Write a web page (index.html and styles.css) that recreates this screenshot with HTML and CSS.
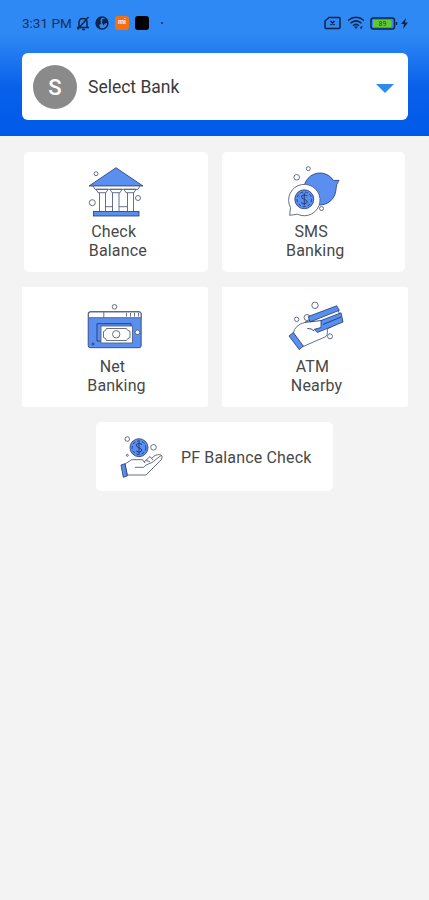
FILE: index.html
```html
<!DOCTYPE html>
<html lang="en">
<head>
    <meta charset="UTF-8">
    <meta name="viewport" content="width=device-width, initial-scale=1.0">
    <title>Bank Balance Check</title>
    <link rel="stylesheet" href="styles.css">
</head>
<body>
<div class="header">
    <div class="status">
        <span class="time">3:31 PM</span>
        <svg class="s-icon" width="14" height="15" viewBox="0 0 14 15"><path d="M3 11V6.500C3 4 4.500 2.500 7 2.500S11 4 11 6.500V11M1 11.500H13M6 13.500H9M12.500 1L1.500 13.500"/></svg>
        <svg class="s-icon globe" width="14" height="14" viewBox="0 0 14 14"><circle cx="7" cy="7" r="5.900"/><path class="dark" d="M1 7C1 3 4 1 7 1L5.500 4L6 8L4 9L6 13C3 12.500 1 10 1 7ZM7.500 3H12L13 7L10 7.500L8.500 9.500L7 7Z"/></svg>
        <span class="app orange">mi</span>
        <span class="app black"></span>
        <span class="dot"></span>
        <span class="right">
            <svg class="s-icon" width="17" height="14" viewBox="0 0 17 14"><path d="M5 1.500H15Q16 1.500 16 2.500V11.500Q16 12.500 15 12.500H2Q1 12.500 1 11.500V5ZM6.500 5L10.500 9M10.500 5L6.500 9"/></svg>
            <svg class="s-icon wifi" width="18" height="14" viewBox="0 0 18 14"><path d="M1 4.500Q9 -2 17 4.500M3.500 7.200Q9 2.500 14.500 7.200M6 9.800Q9 7 12 9.800"/><path class="dark" d="M7 10.500L9 13L11 10.500ZM13 11L16 10L14 13.500Z"/></svg>
            <svg class="s-icon battery" width="28" height="13" viewBox="0 0 28 13"><rect x="1" y="1" width="23.500" height="11" rx="2.500"/><rect class="level" x="3" y="3" width="18.500" height="7"/><path d="M26.500 5V8"/><text x="8.500" y="9.300">89</text></svg>
            <svg width="7" height="11" viewBox="0 0 7 11"><path class="dark" d="M5 0L0 6H3L2 11L7 4.500H4Z"/></svg>
        </span>
    </div>
    <div class="select">
        <span class="avatar">S</span>
        <span class="bank">Select Bank</span>
        <span class="arrow"></span>
    </div>
</div>

<div class="row">
    <div class="card">
        <svg class="icon" width="60" height="54" viewBox="1 0 60 54">
            <path class="blue" d="M31 2.700L58 21H4Z"/>
            <path class="line" d="M8 21H55L53 24.300H10ZM11 24.300H23L21 27.700H13ZM25 24.300H37L35 27.700H27ZM39 24.300H51L49 27.700H41Z"/>
            <path class="line" d="M14.500 28V46M20.500 28V46M27.500 28V46M34 28V46M42.500 28V46M48.500 28V46M20.500 41.700H27.500M34 41.700H42.500"/>
            <rect class="blue" x="8.500" y="46.500" width="45.500" height="4.500"/>
            <circle class="line" cx="11" cy="8.700" r="2"/><circle class="line" cx="7.300" cy="37.700" r="3"/><circle class="line" cx="53" cy="33" r="2.500"/>
        </svg>
        <p>Check 
 Balance</p>
    </div>
    <div class="card">
        <svg class="icon" width="60" height="54" viewBox="-1 0 60 54">
            <path class="blue" d="M55 15.300L49.500 15.500A16 16 0 1 0 51.800 26Q52 19 55 15.300Z"/>
            <path class="line" d="M5.700 50.300L6.500 42.500A15.700 15.700 0 1 1 13.500 49.200Z"/>
            <circle class="blue" cx="20.300" cy="34.300" r="9.500"/>
            <circle class="line ring" cx="20.300" cy="34.300" r="7.300"/>
            <path class="line none" d="M23.500 31Q20.300 28.500 17.500 31Q17 33.500 20.300 34.200Q24 35.500 23.200 37.700Q20 40.500 17 37.500M20.300 28V40.500"/>
            <circle class="line" cx="24.300" cy="3.700" r="2"/><circle class="line" cx="12.700" cy="12.300" r="2.800"/><circle class="line" cx="37.500" cy="43.500" r="2"/>
        </svg>
        <p>SMS 
 Banking</p>
    </div>
</div>
<div class="row wide">
    <div class="card">
        <svg class="icon" width="60" height="54" viewBox="-0.5 0 60 54">
            <rect class="blue" x="2.700" y="11.700" width="53" height="36" rx="2"/>
            <path class="line" d="M3 17.700V14Q3 12 5 12H53.500Q55.500 12 55.500 14V17.700ZM18.300 12V17.700M41 13V16.500M45 13V16.500M49 13V16.500M53 13V16.500"/>
            <path class="line none" d="M15 41H11.500V23.700H45.500V26"/>
            <rect class="line" x="15.500" y="26" width="31.500" height="17"/>
            <path class="line" d="M21 28.500H41Q42 31 44.500 31.500V37.500Q42 38 41 40.500H21Q20.500 38 18 37.500V31.500Q20.500 31 21 28.500Z"/>
            <circle class="line" cx="30.700" cy="34.300" r="3.700"/>
            <circle class="line" cx="52" cy="32.300" r="2.300"/><circle class="line none" cx="7.500" cy="44" r="1"/><circle class="line" cx="29" cy="6.800" r="2.300"/>
        </svg>
        <p>Net 
 Banking</p>
    </div>
    <div class="card">
        <svg class="icon" width="60" height="54" viewBox="0 0 60 54">
            <circle class="line" cx="22" cy="17.500" r="3"/>
            <path class="line" d="M8.300 33Q10 25 20 22.300L52 8L57.500 21L42.300 29Q43 36 40 37L17.700 46.700Z"/>
            <path class="blue" d="M23.300 16.500L51.700 5.800L54.300 10.300L25 22Z"/>
            <path class="blue" d="M36 20.500L56 12.800L58 22L32.300 32.500L29.300 29.300L36 27.500Z"/>
            <path class="line none" d="M20 22.300L36.700 20.500M22.300 28.500Q26 28 29.300 31M38 24.500L56 17"/>
            <path class="blue" d="M4 36L8.300 32.500L18.300 46L14.300 49.700Z"/>
            <circle class="line" cx="30" cy="5.300" r="3.200"/><circle class="line" cx="11.700" cy="19.300" r="2.200"/><circle class="line" cx="45" cy="36.300" r="2.500"/>
        </svg>
        <p>ATM 
 Nearby</p>
    </div>
</div>
<div class="card pf">
    <svg width="50" height="50" viewBox="0 0 50 50">
        <circle class="blue" cx="24" cy="15.700" r="9"/>
        <circle class="line ring" cx="24" cy="15.700" r="6.800"/>
        <path class="line none" d="M27 12.500Q24 10 21.300 12.500Q21 15 24 15.700Q27.500 17 26.700 19Q24 21.500 21 19M24 9.500V22"/>
        <path class="line" d="M10 32L16.700 27.700H27.500L30 31.300L40 23.500Q45 21.500 47 24Q47.500 26 46 28L31 43H12.300Z"/>
        <path class="line" d="M20 35.300H28.500L31 33L37 30.500L46 23.500M29 30L35 24.500L38 28M31 28L35 30"/>
        <path class="blue" d="M6 33L10 31.700L12.300 44L8.300 45.300Z"/>
        <circle class="line" cx="12.300" cy="7" r="2.300"/><circle class="line" cx="38.500" cy="15.300" r="2.800"/><circle class="line" cx="12.300" cy="23.300" r="1"/>
    </svg>
    <span>PF Balance Check</span>
</div>
</body>
</html>
```
FILE: styles.css
```css
* {box-sizing: border-box;}
body {margin: 0; min-height: 900px; background-color: #f3f3f3; font-family: Roboto, sans-serif; color: #484848;}
.header {height: 136px; padding: 8px 21px 0 22px; background: linear-gradient(#2f89f4 0, #2f89f4 34px, #0860ea 88px, #0059e8 136px);}
.status {display: flex; align-items: center; height: 30px; color: #12305c;}
.time {width: 54px; font-size: 13.5px; white-space: nowrap;}
.s-icon {fill: none; stroke: #0d2547; stroke-width: 1.5;}
.globe {margin-left: 5px;}
.dark {fill: #0d2547; stroke: none;}
.app {width: 14px; height: 14px; border-radius: 3px; margin-left: 6px; font-size: 7px; line-height: 13px; font-weight: bold; text-align: center; color: #fff;}
.orange {background-color: #f4700f;}
.black {background-color: #000;}
.dot {width: 2px; height: 2px; margin-left: 12px; border-radius: 50%; background-color: #12305c;}
.right {display: flex; align-items: center; margin-left: auto;}
.wifi {margin: 0 5px 0 6px;}
.battery {margin-right: 3px;}
.level {fill: #62c92e; stroke: none;}
.battery text {font-size: 7px; fill: #24541c; stroke: none;}
.select {display: flex; align-items: center; height: 67px; margin-top: 15px; padding: 0 14px 0 11px; background-color: #fff; border-radius: 6px;}
.avatar {width: 44px; height: 44px; border-radius: 50%; background-color: #8a8a8a; color: #fff; font-size: 22px; font-weight: 500; line-height: 45px; text-align: center;}
.bank {margin-left: 11px; font-size: 17.5px; color: #3a3a3a;}
.arrow {margin: 4px 0 0 auto; border: 9px solid transparent; border-top-color: #2d8bf0; border-bottom: 0;}
.row {display: flex; gap: 14px; padding: 0 24px; margin-top: 16px;}
.wide {padding: 0 21.5px; margin-top: 15px;}
.card {background-color: #fff; border-radius: 5px;}
.row .card {flex: 1; height: 120px; padding-top: 13px; text-align: center;}
.wide .card {border-radius: 2px;}
.icon {display: block; margin: 0 auto;}
.card p {margin: 3px 0 0; font-size: 16px; line-height: 19px; white-space: pre; letter-spacing: 0.15px;}
.pf {display: flex; align-items: center; width: 237px; height: 69px; margin: 15px auto 0; padding-left: 19px;}
.pf span {margin: 2px 0 0 16px; font-size: 16px; letter-spacing: 0.15px; white-space: nowrap;}
.blue {fill: #5a8ff0; stroke: #24396e; stroke-width: 0.8;}
.line {fill: #fff; stroke: #53607e; stroke-width: 0.9;}
.none {fill: none; stroke: #24396e;}
.ring {fill: none; stroke: #24396e; stroke-dasharray: 3 2;}
```
